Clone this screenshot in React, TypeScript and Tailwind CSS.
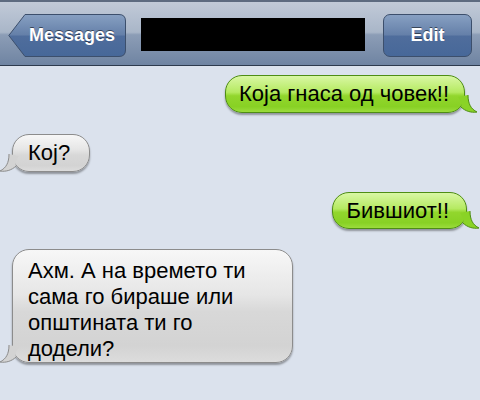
import React from 'react';

const font = { fontFamily: '"Liberation Sans", Arial, sans-serif' };

const Tail = ({ side, green }: { side: 'left' | 'right'; green: boolean }) => {
  const fill = green ? '#8ad326' : '#d3d3d3';
  const stroke = green ? '#4e8d14' : '#8c8c8c';
  if (side === 'right') {
    return (
      <svg className="absolute -right-[14px] bottom-[-2px]" width="20" height="20" viewBox="0 0 20 20">
        <path d="M0 3 C3 7 4 11 3 13 C7 17 13 19 19 18 C13 15 10 10 10 1 Z" fill={fill} />
        <path d="M3 13 C7 17 13 19 19 18 C13 15 10 10 10 1" fill="none" stroke={stroke} strokeWidth="1" />
      </svg>
    );
  }
  return (
    <svg className="absolute -left-[14px] bottom-[-2px]" width="20" height="20" viewBox="0 0 20 20">
      <path d="M20 3 C17 7 16 11 17 13 C13 17 7 19 1 18 C7 15 10 10 10 1 Z" fill={fill} />
      <path d="M17 13 C13 17 7 19 1 18 C7 15 10 10 10 1" fill="none" stroke={stroke} strokeWidth="1" />
    </svg>
  );
};

const Bubble = ({ children, green, side, className }: { children: React.ReactNode; green?: boolean; side: 'left' | 'right'; className?: string }) => (
  <div
    className={
      'relative rounded-[17px] border shadow-[0_2px_2px_rgba(0,0,0,0.35)] text-black ' +
      (green
        ? 'border-[#4e8d14] bg-[linear-gradient(#d9f7a4_0%,#b5ea61_45%,#92d62d_55%,#88d124_85%,#9bdc3c_100%)] '
        : 'border-[#8c8c8c] bg-[linear-gradient(#f7f7f7_0%,#e6e6e6_40%,#d8d8d8_55%,#d3d3d3_85%,#dcdcdc_100%)] ') +
      (className ?? '')
    }
  >
    {children}
    <Tail side={side} green={!!green} />
  </div>
);

export default function App() {
  return (
    <div className="w-[480px] h-[400px] bg-[#dbe2ed] overflow-hidden" style={font}>
      {/* Nav bar */}
      <div className="h-[66px] border-t-2 border-t-[#5d6b80] border-b border-b-[#2d3a4d] bg-[linear-gradient(#c1cad8_0%,#a9b6c8_48%,#8c9db6_52%,#6f84a2_100%)] flex items-center px-2">
        <div className="relative w-[118px] h-[43px] mt-[3px] flex items-center justify-center">
          <svg className="absolute inset-0" width="118" height="43" viewBox="0 0 118 43">
            <defs>
              <linearGradient id="bb" x1="0" y1="0" x2="0" y2="1">
                <stop offset="0" stopColor="#87a0c2" />
                <stop offset="0.48" stopColor="#6580a9" />
                <stop offset="0.52" stopColor="#4f6d9c" />
                <stop offset="1" stopColor="#476899" />
              </linearGradient>
            </defs>
            <path d="M17 0.5 L111 0.5 Q117.5 0.5 117.5 7 L117.5 36 Q117.5 42.5 111 42.5 L17 42.5 L0.8 21.5 Z" fill="url(#bb)" stroke="#3c4f6c" strokeWidth="1" />
          </svg>
          <span className="relative ml-[10px] text-white font-bold text-[18px] [text-shadow:0_-1px_0_rgba(0,0,0,0.5)]">Messages</span>
        </div>
        <div className="w-[224px] h-[33px] bg-black ml-[15px] mt-[1px]" />
        <div className="ml-auto mt-[3px] w-[89px] h-[43px] rounded-[7px] border border-[#3c4f6c] bg-[linear-gradient(#87a0c2_0%,#6580a9_48%,#4f6d9c_52%,#476899_100%)] flex items-center justify-center">
          <span className="text-white font-bold text-[18px] [text-shadow:0_-1px_0_rgba(0,0,0,0.5)]">Edit</span>
        </div>
      </div>

      {/* Messages */}
      <div className="flex flex-col pt-[9px] px-[12px]">
        <div className="flex justify-end pr-[3px]">
          <Bubble green side="right" className="pl-[13px] pr-[15px] pt-[6px] pb-[6px] text-[22px] leading-[24px]">Која гнаса од човек!!</Bubble>
        </div>
        <div className="flex justify-start mt-[21px]">
          <Bubble side="left" className="pl-[15px] pr-[19px] pt-[6px] pb-[6px] text-[22px] leading-[24px]">Кој?</Bubble>
        </div>
        <div className="flex justify-end mt-[20px] pr-[1px]">
          <Bubble green side="right" className="pl-[14px] pr-[17px] pt-[6px] pb-[5px] text-[22px] leading-[24px]">Бившиот!!</Bubble>
        </div>
        <div className="flex justify-start mt-[20px]">
          <Bubble side="left" className="w-[281px] pl-[15px] pr-[10px] pt-[8px] pb-0 text-[22px] leading-[26px]">
            Ахм. А на времето ти<br />
            сама го бираше или<br />
            општината ти го<br />
            додели?
          </Bubble>
        </div>
      </div>
    </div>
  );
}
